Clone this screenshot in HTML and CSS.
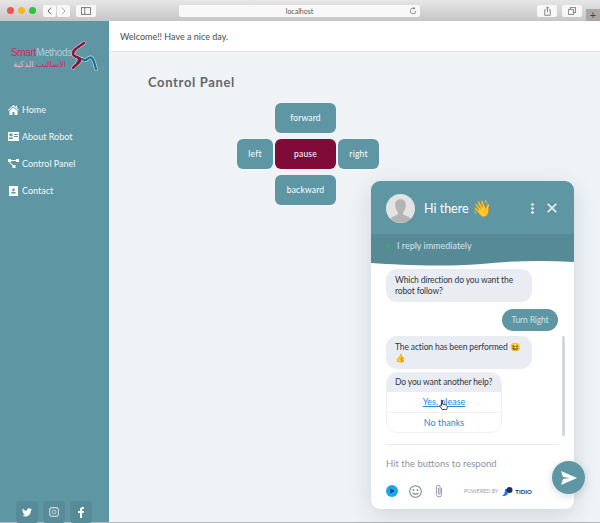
FILE: index.html
```html
<!DOCTYPE html>
<html lang="en">
<head>
<meta charset="utf-8">
<title>Control Panel</title>
<link rel="stylesheet" href="styles.css">
</head>
<body>
<div class="toolbar">
  <div class="lights"><span class="light red"></span><span class="light yellow"></span><span class="light green"></span></div>
  <div class="nav-pair">
    <span class="tool-btn nav-btn"><svg width="7" height="8" viewBox="0 0 7 11"><path d="M5.500 1 1.500 5.500 5.500 10" fill="none" stroke="#555" stroke-width="1.300"/></svg></span>
    <span class="tool-btn nav-btn"><svg width="7" height="8" viewBox="0 0 7 11"><path d="M1.500 1 5.500 5.500 1.500 10" fill="none" stroke="#aaa" stroke-width="1.300"/></svg></span>
  </div>
  <span class="tool-btn side-btn"><svg width="10" height="8" viewBox="0 0 12 9"><rect x=".5" y=".5" width="11" height="8" fill="none" stroke="#666"/><path d="M4.500 .5v8" stroke="#666"/></svg></span>
  <div class="address"><span class="address-text">localhost</span>
    <svg class="reload" width="8" height="8" viewBox="0 0 10 10"><path d="M8.500 5A3.500 3.500 0 1 1 6 1.600" fill="none" stroke="#777" stroke-width="1"/><path d="M5.500 0v3.400L8 1.700z" fill="#777"/></svg>
  </div>
  <span class="tool-btn act-btn act-share"><svg width="7" height="10" viewBox="0 0 9 12"><path d="M2.500 4.500H1v7h7v-7H6.500M4.500 7.500V1M2.800 2.500 4.500.8l1.700 1.700" fill="none" stroke="#666"/></svg></span>
  <span class="tool-btn act-btn act-tabs"><svg width="8" height="8" viewBox="0 0 10 10"><path d="M3 2.500V.5h6.500V7H7.500M.5 3h6.500v6.500H.5z" fill="none" stroke="#666"/></svg></span>
  <span class="new-tab">+</span>
</div>

<div class="app">
  <aside class="sidebar">
    <div class="logo">
      <svg class="logo-mark" width="90" height="36" viewBox="0 0 90 36">
        <g fill="none" stroke-linecap="round">
          <path class="halo" d="M73 3C68 7 61 10 62 14 63 18 69 16 69 20 69 24 64 24 62 28"/>
          <path class="halo" d="M66 23C70 14 72 22 75 20 79 17 81 13 85 29"/>
          <path d="M66 23C70 14 72 22 75 20 79 17 81 13 85 29" stroke="#1f6f8f" stroke-width="2.400"/>
          <path d="M73 3C68 7 61 10 62 14 63 18 69 16 69 20 69 24 64 24 62 28" stroke="#8e1238" stroke-width="2.600"/>
        </g>
      </svg>
      <span class="logo-en"><span class="logo-red">Smart</span>Methods</span>
      <span class="logo-ar"><span class="logo-red">الأساليب</span> الذكية</span>
    </div>
    <nav class="menu">
      <a class="menu-item"><svg class="menu-icon" width="11" height="10" viewBox="0 0 11 10"><path d="M5.500 0 0 5l.7.700L5.500 1.500l4.800 4.200.7-.7-2-1.800V.7H8v1.200zM1.500 6v4h3V7h2v3h3V6L5.500 2.500z" fill="#fff"/></svg>Home</a>
      <a class="menu-item"><svg class="menu-icon" width="11" height="9" viewBox="0 0 11 9"><path fill-rule="evenodd" d="M0 0h11v9H0zM1.500 1.500v2.800h3V1.500zM6 2v1h4V2zM6 4v1h4V4zM1 5.500V7h4V5.500z" fill="#fff"/></svg>About Robot</a>
      <a class="menu-item"><svg class="menu-icon" width="11" height="9" viewBox="0 0 11 9"><path d="M0 0h3v3H0zM8 0h3v3H8zM4.500 6h3v3h-3zM3 1h5v1H3zM2 3l3 3-.7.7-3-3z" fill="#fff"/></svg>Control Panel</a>
      <a class="menu-item"><svg class="menu-icon" width="9" height="10" viewBox="0 0 9 10"><path fill-rule="evenodd" d="M0 0h9v10H0zM4.500 2.500a1.300 1.300 0 1 0 0 2.600 1.300 1.300 0 0 0 0-2.600zM2 7.500h5c0-1.200-1-1.800-2.500-1.800S2 6.300 2 7.500z" fill="#fff"/></svg>Contact</a>
    </nav>
    <div class="socials">
      <span class="social"><svg width="10" height="9" viewBox="0 0 24 20"><path d="M24 2.400a10 10 0 0 1-2.800.8A5 5 0 0 0 23.300.5a10 10 0 0 1-3.100 1.200 4.900 4.900 0 0 0-8.400 4.500A14 14 0 0 1 1.700.9a4.900 4.900 0 0 0 1.500 6.600 5 5 0 0 1-2.200-.6 4.900 4.900 0 0 0 3.900 4.900 5 5 0 0 1-2.200.1 4.900 4.900 0 0 0 4.600 3.400A10 10 0 0 1 0 17.300 14 14 0 0 0 21.500 4.900 10 10 0 0 0 24 2.400z" fill="#fff"/></svg></span>
      <span class="social"><svg width="10" height="10" viewBox="0 0 10 10"><rect x=".6" y=".6" width="8.800" height="8.800" rx="2.500" fill="none" stroke="#c9dbe0" stroke-width="1.100"/><circle cx="5" cy="5" r="2" fill="none" stroke="#c9dbe0"/></svg></span>
      <span class="social"><svg width="6" height="11" viewBox="0 0 6 11"><path d="M4 11V6h1.700L6 4H4V3c0-.6.200-1 1-1h1V.2C5.700.1 5.100 0 4.500 0 3 0 2 .9 2 2.700V4H0v2h2v5z" fill="#fff"/></svg></span>
    </div>
  </aside>

  <main class="main">
    <header class="topbar">Welcome!! Have a nice day.</header>
    <section class="panel">
      <h1 class="panel-title">Control Panel</h1>
      <div class="pad">
        <button class="pad-btn pad-forward">forward</button>
        <button class="pad-btn pad-left">left</button>
        <button class="pad-btn pad-pause">pause</button>
        <button class="pad-btn pad-right">right</button>
        <button class="pad-btn pad-backward">backward</button>
      </div>
    </section>
  </main>
</div>

<div class="chat">
  <div class="chat-head">
    <span class="avatar"><svg width="28" height="28" viewBox="0 0 28 28"><circle cx="14" cy="14" r="14" fill="#e3e3e3"/><path d="M14 5c-4 0-5.500 3-5 7 .3 2.500 1.500 4.500 2.500 5.500v2C9 21.500 5 21.500 4.500 24a14 14 0 0 0 19 0c-.5-2.500-4.500-2.500-7-4.500v-2c1-1 2.200-3 2.500-5.500.5-4-1-7-5-7z" fill="#b4b4b4"/></svg></span>
    <span class="chat-title">Hi there <span class="wave">👋</span></span>
    <svg class="dots" width="3" height="11" viewBox="0 0 3 11"><circle cx="1.500" cy="1.500" r="1.300" fill="#fff"/><circle cx="1.500" cy="5.500" r="1.300" fill="#fff"/><circle cx="1.500" cy="9.500" r="1.300" fill="#fff"/></svg>
    <svg class="close" width="10" height="10" viewBox="0 0 10 10"><path d="M.7.700l8.600 8.600M9.300.700.700 9.300" stroke="#fff" stroke-width="1.400"/></svg>
  </div>
  <div class="chat-status"><span class="status-dot"></span>I reply immediately</div>
  <svg class="chat-wave" width="203" height="6" viewBox="0 0 203 6" preserveAspectRatio="none"><path d="M0 0h203v2C170 0 140 1 110 4 70 7 30 5 0 3z" fill="#568a96"/></svg>
  <div class="chat-body">
    <div class="bubble q-one">Which direction do you want the robot follow?</div>
    <div class="bubble-me">Turn Right</div>
    <div class="bubble q-two">The action has been performed 😆<br>👍</div>
    <div class="card">
      <div class="card-q">Do you want another help?</div>
      <a class="card-opt card-opt-hover">Yes, please</a>
      <a class="card-opt">No thanks</a>
    </div>
    <span class="scroll-thumb"></span>
    <svg class="cursor" width="9" height="12" viewBox="0 0 9 12"><path d="M2.500 1c.6 0 1 .4 1 1v3l3.500 1c1 .3 1.500 1 1.300 2l-.5 2.500H3L.7 6.500c.6-.6 1.300-.4 1.800.2V2c0-.6 0-1 0-1z" fill="#fff" stroke="#222" stroke-width=".8"/></svg>
  </div>
  <div class="chat-foot">
    <div class="input-line">Hit the buttons to respond</div>
    <div class="foot-row">
      <svg width="12" height="12" viewBox="0 0 12 12"><circle cx="6" cy="6" r="6" fill="#1aa7f0"/><path d="M4.500 3.500v5L8.500 6z" fill="#10355a"/></svg>
      <svg class="foot-emoji" width="13" height="13" viewBox="0 0 13 13"><circle cx="6.500" cy="6.500" r="5.800" fill="none" stroke="#7b8794" stroke-width="1.100"/><circle cx="4.500" cy="5" r=".9" fill="#7b8794"/><circle cx="8.500" cy="5" r=".9" fill="#7b8794"/><path d="M3.500 7.800c1.500 1.800 4.500 1.800 6 0" fill="none" stroke="#7b8794" stroke-width="1.100"/></svg>
      <svg class="foot-clip" width="8" height="14" viewBox="0 0 8 14"><path d="M6.500 4v6.500a2.500 2.500 0 0 1-5 0V3a1.800 1.800 0 0 1 3.600 0v6.500a.8.800 0 0 1-1.600 0V4" fill="none" stroke="#8a94a0" stroke-width=".9"/></svg>
      <span class="powered">POWERED BY</span>
      <svg width="11" height="9" viewBox="0 0 11 9"><path d="M3 2h3v2a4 4 0 0 1-4 5H0c2-1 3-3 3-7z" fill="#1f7af0"/><circle cx="7.500" cy="3" r="3" fill="#17336b"/></svg>
      <span class="tidio">TIDIO</span>
    </div>
  </div>
</div>
<span class="send"><svg width="16" height="14" viewBox="0 0 16 14"><path d="M0 0 16 7 0 14l2-6 7-1-7-1z" fill="#fff"/></svg></span>
</body>
</html>
```
FILE: styles.css
```css
* { box-sizing: border-box; }
html, body { margin: 0; height: 100%; }
body {
  width: 600px;
  height: 523px;
  overflow: hidden;
  display: flex;
  flex-direction: column;
  font-family: "Lato", "Noto Sans", sans-serif;
  background: #eff3f6;
}
.toolbar {
  height: 21px;
  flex: none;
  display: flex;
  align-items: center;
  padding: 0 0 0 7px;
  background: linear-gradient(#e6e6e6, #c6c6c6);
}
.lights { display: flex; gap: 4px; }
.light { width: 7px; height: 7px; border-radius: 50%; }
.red { background: #f0544c; }
.yellow { background: #f6b42a; }
.green { background: #2fc340; }
.nav-pair { display: flex; gap: 1px; margin-left: 7px; }
.tool-btn {
  height: 12px;
  background: #f7f7f7;
  border-radius: 2px;
  display: flex;
  align-items: center;
  justify-content: center;
}
.nav-btn { width: 13px; }
.side-btn { width: 20px; margin-left: 6px; }
.address {
  width: 241px;
  height: 12px;
  margin-left: 83px;
  background: #f8f8f8;
  border-radius: 2px;
  display: flex;
  align-items: center;
  justify-content: center;
  position: relative;
  font-size: 7px;
  color: #555;
}
.reload { position: absolute; right: 3px; top: 2px; }
.act-btn { width: 20px; }
.act-share { margin-left: 117px; }
.act-tabs { margin-left: 5px; }
.new-tab {
  margin-left: 4px;
  width: 14px;
  align-self: flex-end;
  height: 12px;
  background: #a8a8a8;
  font-size: 11px;
  line-height: 12px;
  text-align: center;
  color: #444;
}
.app { flex: 1; display: flex; min-height: 0; border-bottom: 1px solid #b4b8bc; }
.sidebar {
  width: 109px;
  flex: none;
  background: #5f96a3;
  display: flex;
  flex-direction: column;
  color: #fff;
}
.logo {
  position: relative;
  height: 37px;
  margin: 19px 0 0 11px;
  width: 90px;
}
.logo-mark { position: absolute; left: 0; top: 0; }
.halo { stroke: #cfe0e4; stroke-width: 3.600; }
.logo-en {
  position: absolute;
  left: 0;
  top: 7px;
  font-family: "Liberation Sans", sans-serif;
  font-size: 10px;
  line-height: 11px;
  letter-spacing: -.35px;
  color: #b9ccd4;
}
.logo-red { color: #d6265a; }
.logo-ar {
  position: absolute;
  left: 2px;
  top: 18px;
  font-family: "Noto Sans", "DejaVu Sans", sans-serif;
  font-size: 8.500px;
  line-height: 11px;
  color: #e2b6c6;
  white-space: nowrap;
}
.menu { display: flex; flex-direction: column; margin-top: 19px; }
.menu-item {
  height: 27px;
  display: flex;
  align-items: center;
  font-size: 9px;
  padding-left: 8px;
  color: #f3f7f8;
}
.menu-icon { flex: none; margin-right: 3px; width: 11px; }
.socials {
  margin-top: auto;
  padding: 0 0 0 16px;
  display: flex;
  gap: 5px;
  height: 21px;
}
.social {
  width: 22px;
  height: 22px;
  border-radius: 3px;
  background: #578b97;
  display: flex;
  align-items: center;
  justify-content: center;
}
.main { flex: 1; display: flex; flex-direction: column; min-width: 0; }
.topbar {
  height: 31px;
  flex: none;
  padding: 0 0 0 11px;
  display: flex;
  align-items: center;
  background: #fff;
  border-bottom: 1px solid #dfe3e6;
  font-size: 9px;
  color: #4a4a4a;
}
.panel { flex: 1; padding: 21px 0 0 39px; }
.panel-title {
  margin: 0;
  font-size: 13px;
  line-height: 18px;
  font-weight: 700;
  letter-spacing: .65px;
  color: #63666a;
}
.pad {
  display: grid;
  grid-template-columns: 36px 61px 41px;
  grid-template-rows: 30px 30px 30px;
  gap: 6px 2px;
  margin: 12px 0 0 89px;
}
.pad-btn {
  border: 0;
  padding: 0;
  border-radius: 6px;
  background: #5f96a3;
  color: #fff;
  font: 400 8.500px "Lato", sans-serif;
  letter-spacing: .2px;
}
.pad-forward { grid-column: 2; grid-row: 1; }
.pad-left { grid-column: 1; grid-row: 2; }
.pad-pause { grid-column: 2; grid-row: 2; background: #800a38; }
.pad-right { grid-column: 3; grid-row: 2; }
.pad-backward { grid-column: 2; grid-row: 3; }
.chat {
  position: absolute;
  left: 371px;
  top: 181px;
  width: 203px;
  height: 328px;
  border-radius: 9px;
  background: #fff;
  box-shadow: 0 6px 22px rgba(40, 60, 80, .16);
  display: flex;
  flex-direction: column;
  overflow: hidden;
}
.chat-head {
  height: 53px;
  flex: none;
  background: #5f96a3;
  display: flex;
  align-items: center;
  padding: 1px 0 0 15px;
  color: #fff;
}
.avatar { width: 29px; height: 29px; flex: none; }
.avatar svg { display: block; width: 29px; height: 29px; }
.chat-title { margin-left: 9px; font-size: 12.500px; font-family: "Lato", sans-serif; }
.wave { font-size: 16px; line-height: 16px; vertical-align: -1px; }
.dots { margin-left: auto; }
.close { margin: 0 17px 0 13px; }
.chat-status {
  height: 26px;
  flex: none;
  background: #568a96;
  color: #d8e5e8;
  font-size: 9px;
  display: flex;
  align-items: center;
  padding: 0 0 3px 15px;
}
.status-dot {
  width: 4px;
  height: 4px;
  border-radius: 50%;
  background: #35b34a;
  margin-right: 7px;
}
.chat-wave { display: block; flex: none; }
.chat-body {
  position: relative;
  flex: 1;
  min-height: 0;
  padding: 3px 0 0 15px;
  font-size: 8.500px;
  letter-spacing: -.13px;
  line-height: 11px;
  color: #2f3640;
}
.bubble {
  width: 146px;
  padding: 6px 9px 5px;
  background: #e9edf3;
  border-radius: 11px;
}
.bubble-me {
  width: 56px;
  height: 22px;
  margin: 7px 0 0 116px;
  border-radius: 11px;
  background: #5f96a3;
  color: #cfe0e4;
  text-align: center;
  line-height: 22px;
}
.q-two { margin-top: 5px; }
.card {
  width: 116px;
  margin-top: 3px;
  border-radius: 11px;
  border: 1px solid #edf0f4;
  overflow: hidden;
}
.card-q {
  height: 20px;
  margin: -1px -1px 0;
  padding: 0 9px;
  background: #e9edf3;
  line-height: 20px;
  white-space: nowrap;
}
.card-opt {
  display: block;
  height: 20px;
  line-height: 20px;
  text-align: center;
  font-size: 9px;
  letter-spacing: 0;
  color: #2b87dc;
  border-top: 1px solid #edf0f4;
}
.card-opt-hover { text-decoration: underline; border-top: 0; }
.scroll-thumb {
  position: absolute;
  left: 191px;
  top: 70px;
  width: 3px;
  height: 100px;
  border-radius: 2px;
  background: #d4d8de;
}
.cursor { position: absolute; left: 68px; top: 133px; }
.chat-foot { flex: none; padding: 0 15px; height: 65px; }
.input-line {
  height: 27px;
  border-top: 1px solid #e8ebee;
  padding-top: 12px;
  font-size: 9.500px;
  line-height: 13px;
  color: #8d96a0;
  box-sizing: content-box;
}
.foot-row { display: flex; align-items: center; height: 14px; }
.foot-emoji { margin-left: 11px; }
.foot-clip { margin-left: 13px; }
.powered { margin-left: 21px; margin-right: 4px; font-size: 5.300px; color: #9aa2ab; }
.tidio { margin-left: 2px; font-size: 6px; font-weight: 700; color: #17336b; }
.send {
  position: absolute;
  left: 552px;
  top: 461px;
  width: 33px;
  height: 33px;
  border-radius: 50%;
  background: #5f96a3;
  box-shadow: 0 2px 8px rgba(40, 60, 80, .2);
  display: flex;
  align-items: center;
  justify-content: center;
}
```
